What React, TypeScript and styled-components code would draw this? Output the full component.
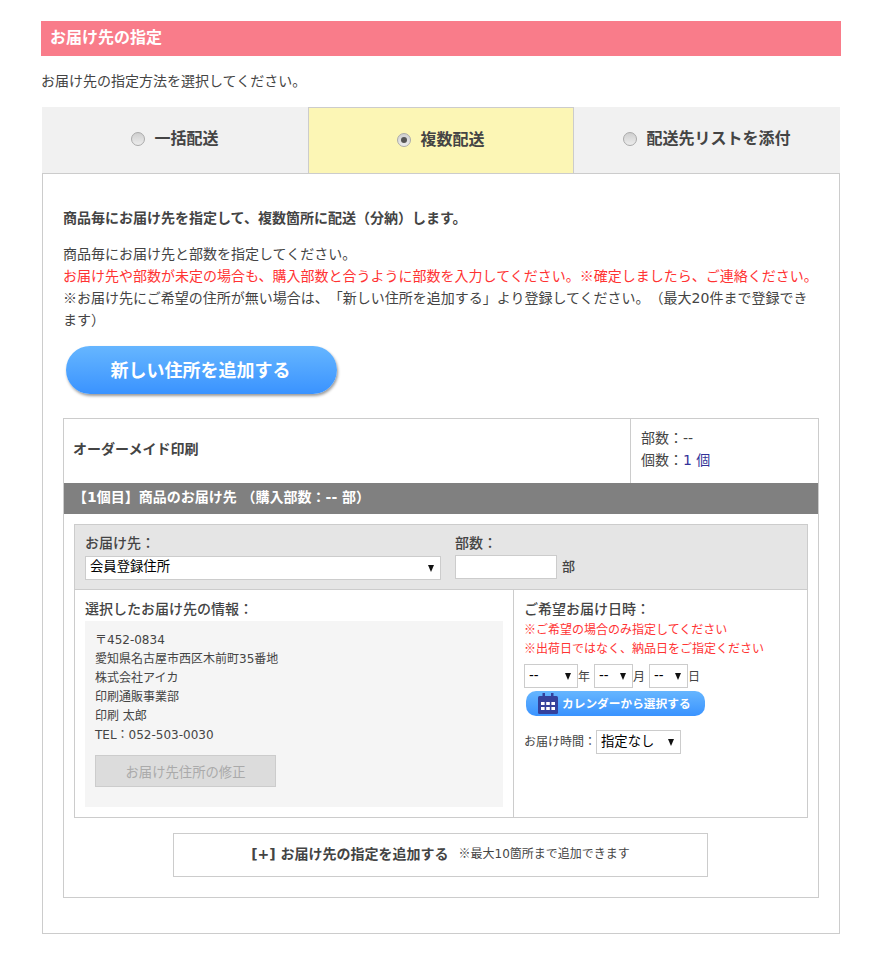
import React from 'react';
import styled, { createGlobalStyle } from 'styled-components';

const GlobalStyle = createGlobalStyle`
  body {
    margin: 0;
    background: #fff;
    color: #444;
    font-family: "DejaVu Sans", "Noto Sans CJK JP", sans-serif;
    font-size: 14px;
    line-height: 22px;
    text-spacing-trim: space-all;
  }
`;

const Page = styled.div`
  width: 800px;
  padding: 21px 0 24px 41px;
`;

const Heading = styled.h2`
  margin: 0;
  height: 35px;
  padding-left: 9px;
  background: #f97c8a;
  color: #fff;
  font-size: 16px;
  font-weight: 700;
  line-height: 33px;
`;

const Intro = styled.p`
  margin: 14px 0 15px;
`;

const Tabs = styled.div`
  display: grid;
  grid-template-columns: 266px 266px 266px;
  margin-left: 1px;
  height: 66px;
`;

const Tab = styled.div<{ $active?: boolean }>`
  display: flex;
  align-items: center;
  justify-content: center;
  gap: 9px;
  box-sizing: border-box;
  padding-bottom: 2px;
  background: ${(p) => (p.$active ? '#fcf6b5' : '#f1f1f1')};
  border: ${(p) => (p.$active ? '1px solid #ccc' : 'none')};
  border-bottom: none;
  color: #444;
  font-size: 16px;
  font-weight: 700;
`;

const Radio = styled.span<{ $checked?: boolean }>`
  position: relative;
  width: 12px;
  height: 12px;
  border-radius: 50%;
  border: 1px solid #aaa;
  background: linear-gradient(#cfcfcf, #ececec);

  &::after {
    content: '';
    display: ${(p) => (p.$checked ? 'block' : 'none')};
    position: absolute;
    inset: 3px;
    border-radius: 50%;
    background: #555;
  }
`;

const Panel = styled.div`
  box-sizing: border-box;
  width: 798px;
  height: 761px;
  margin-left: 1px;
  padding: 33px 20px 0;
  border: 1px solid #ccc;
`;

const Lead = styled.p`
  margin: 0 0 14px;
  font-weight: 700;
  font-size: 14px;
`;

const Notes = styled.p`
  margin: 0;
`;

const Red = styled.span`
  color: #ff3333;
`;

const Kome = styled.span`
  font-family: "Noto Sans CJK JP", sans-serif;
  line-height: 0;
`;

const AddAddress = styled.button`
  display: block;
  width: 271px;
  height: 48px;
  margin: 15px 0 24px 3px;
  padding: 0 2px 2px 0;
  border: none;
  border-radius: 24px;
  background: linear-gradient(#66b6ff, #3a93ff);
  box-shadow: 1px 2px 3px rgba(0, 0, 0, 0.4);
  color: #fff;
  font-family: inherit;
  font-size: 18px;
  font-weight: 700;
`;

const Order = styled.div`
  box-sizing: border-box;
  width: 756px;
  height: 480px;
  border: 1px solid #ccc;
`;

const ProductRow = styled.div`
  display: grid;
  grid-template-columns: 566px 1fr;
  height: 64px;
`;

const ProductName = styled.div`
  display: flex;
  align-items: center;
  padding: 0 0 5px 9px;
  font-weight: 700;
  font-size: 14px;
`;

const ProductMeta = styled.div`
  padding: 8px 0 0 10px;
  border-left: 1px solid #ccc;
`;

const Link = styled.span`
  color: #333399;
`;

const Bar = styled.div`
  height: 31px;
  padding-left: 9px;
  background: #808080;
  color: #fff;
  font-weight: 700;
  line-height: 29px;
`;

const Dest = styled.div`
  box-sizing: border-box;
  width: 734px;
  height: 294px;
  margin: 10px 0 0 10px;
  border: 1px solid #ccc;
`;

const DestTop = styled.div`
  display: flex;
  height: 65px;
  box-sizing: border-box;
  padding: 7px 10px 0;
  background: #e5e5e5;
  border-bottom: 1px solid #ccc;
`;

const Field = styled.div<{ $w: number }>`
  width: ${(p) => p.$w}px;
`;

const Label = styled.div`
  height: 23px;
  font-weight: 500;
  font-size: 14px;
  line-height: 24px;
`;

const FieldLabel = styled(Label)`
  line-height: 22px;
`;

const SelectBox = styled.span<{ $w: number }>`
  position: relative;
  display: inline-block;
  flex: none;
  width: ${(p) => p.$w}px;
  height: 24px;

  &::after {
    content: '';
    position: absolute;
    top: 9px;
    right: 7px;
    border-style: solid;
    border-width: 7px 3.5px 0;
    border-color: #111 transparent transparent;
  }
`;

const Select = styled.select`
  display: block;
  box-sizing: border-box;
  width: 100%;
  height: 24px;
  padding: 0 0 2px 4px;
  border: 1px solid #ccc;
  border-radius: 0;
  appearance: none;
  background: #fff;
  color: #000;
  font-family: inherit;
  font-size: 13.33px;
`;

const QtyRow = styled.div`
  display: flex;
  align-items: center;
  gap: 5px;
  font-weight: 500;
  font-size: 13px;
`;

const QtyInput = styled.input`
  box-sizing: border-box;
  width: 102px;
  height: 24px;
  border: 1px solid #ccc;
`;

const DestBottom = styled.div`
  display: grid;
  grid-template-columns: 438px 1fr;
  height: 227px;
`;

const InfoCell = styled.div`
  padding: 7px 10px 0;
`;

const WhenCell = styled.div`
  padding: 7px 10px 0;
  border-left: 1px solid #ccc;
`;

const AddressBox = styled.div`
  box-sizing: border-box;
  height: 186px;
  margin-top: 1px;
  padding: 10px 10px 0;
  background: #f5f5f5;
  font-size: 12px;
  line-height: 19px;
`;

const EditButton = styled.button`
  display: block;
  width: 181px;
  height: 32px;
  margin-top: 10px;
  border: 1px solid #ccc;
  background: #dcdcdc;
  color: #aaa;
  font-family: inherit;
  font-size: 13.33px;
`;

const Warnings = styled.div`
  margin-top: 1px;
  color: #ff3333;
  font-size: 12px;
  line-height: 19px;
`;

const DateRow = styled.div`
  display: flex;
  align-items: center;
  height: 24px;
  margin-top: 5px;
  font-size: 12px;
`;

const Unit = styled.span`
  margin-right: 4px;
  padding-top: 2px;
`;

const CalendarButton = styled.div`
  display: flex;
  align-items: center;
  gap: 4px;
  width: 179px;
  height: 25px;
  box-sizing: border-box;
  margin: 3px 0 0 2px;
  padding-left: 12px;
  border-radius: 10px;
  background: linear-gradient(#66b6ff, #3a93ff);
  color: #fff;
  font-size: 11.7px;
  font-weight: 700;
`;

const TimeRow = styled.div`
  display: flex;
  align-items: center;
  margin-top: 14px;
  font-size: 12px;
`;

const AddDest = styled.div`
  display: flex;
  align-items: center;
  justify-content: center;
  gap: 10px;
  box-sizing: border-box;
  width: 535px;
  height: 44px;
  margin: 15px 0 0 109px;
  padding-bottom: 2px;
  border: 1px solid #ccc;
  font-weight: 700;
`;

const AddNote = styled.span`
  font-size: 12px;
  font-weight: 400;
`;

const CalendarIcon = () => (
  <svg width="20" height="21" viewBox="0 0 20 21">
    <rect x="0" y="3" width="20" height="18" rx="1.5" fill="#34419c" />
    <rect x="4.5" y="0" width="2.5" height="4" fill="#34419c" />
    <rect x="13" y="0" width="2.5" height="4" fill="#34419c" />
    <g fill="#fff">
      <rect x="3" y="9" width="3.6" height="3" />
      <rect x="8.2" y="9" width="3.6" height="3" />
      <rect x="13.4" y="9" width="3.6" height="3" />
      <rect x="3" y="14" width="3.6" height="3" />
      <rect x="8.2" y="14" width="3.6" height="3" />
      <rect x="13.4" y="14" width="3.6" height="3" />
    </g>
  </svg>
);

const Dropdown = ({ w, label }: { w: number; label: string }) => (
  <SelectBox $w={w}>
    <Select>
      <option>{label}</option>
    </Select>
  </SelectBox>
);

const App = () => {
  return (
    <Page>
      <GlobalStyle />
      <Heading>お届け先の指定</Heading>
      <Intro>お届け先の指定方法を選択してください。</Intro>
      <Tabs>
        <Tab>
          <Radio />
          一括配送
        </Tab>
        <Tab $active>
          <Radio $checked />
          複数配送
        </Tab>
        <Tab>
          <Radio />
          配送先リストを添付
        </Tab>
      </Tabs>
      <Panel>
        <Lead>商品毎にお届け先を指定して、複数箇所に配送（分納）します。</Lead>
        <Notes>
          商品毎にお届け先と部数を指定してください。
          <br />
          <Red>お届け先や部数が未定の場合も、購入部数と合うように部数を入力してください。<Kome>※</Kome>確定しましたら、ご連絡ください。</Red>
          <br />
          <Kome>※</Kome>お届け先にご希望の住所が無い場合は、「新しい住所を追加する」より登録してください。（最大20件まで登録でき
          <br />
          ます）
        </Notes>
        <AddAddress>新しい住所を追加する</AddAddress>
        <Order>
          <ProductRow>
            <ProductName>オーダーメイド印刷</ProductName>
            <ProductMeta>
              部数：--
              <br />
              個数：<Link>1 個</Link>
            </ProductMeta>
          </ProductRow>
          <Bar>【1個目】商品のお届け先 （購入部数：-- 部）</Bar>
          <Dest>
            <DestTop>
              <Field $w={370}>
                <FieldLabel>お届け先：</FieldLabel>
                <Dropdown w={356} label="会員登録住所" />
              </Field>
              <Field $w={200}>
                <FieldLabel>部数：</FieldLabel>
                <QtyRow>
                  <QtyInput />
                  <span>部</span>
                </QtyRow>
              </Field>
            </DestTop>
            <DestBottom>
              <InfoCell>
                <Label>選択したお届け先の情報：</Label>
                <AddressBox>
                  〒452-0834
                  <br />
                  愛知県名古屋市西区木前町35番地
                  <br />
                  株式会社アイカ
                  <br />
                  印刷通販事業部
                  <br />
                  印刷 太郎
                  <br />
                  TEL：052-503-0030
                  <EditButton>お届け先住所の修正</EditButton>
                </AddressBox>
              </InfoCell>
              <WhenCell>
                <Label>ご希望お届け日時：</Label>
                <Warnings>
                  <Kome>※</Kome>ご希望の場合のみ指定してください
                  <br />
                  <Kome>※</Kome>出荷日ではなく、納品日をご指定ください
                </Warnings>
                <DateRow>
                  <Dropdown w={54} label="--" />
                  <Unit>年</Unit>
                  <Dropdown w={39} label="--" />
                  <Unit>月</Unit>
                  <Dropdown w={39} label="--" />
                  <Unit>日</Unit>
                </DateRow>
                <CalendarButton>
                  <CalendarIcon />
                  カレンダーから選択する
                </CalendarButton>
                <TimeRow>
                  <span>お届け時間：</span>
                  <Dropdown w={85} label="指定なし" />
                </TimeRow>
              </WhenCell>
            </DestBottom>
          </Dest>
          <AddDest>
            <span>[+] お届け先の指定を追加する</span>
            <AddNote>
              <Kome>※</Kome>最大10箇所まで追加できます
            </AddNote>
          </AddDest>
        </Order>
      </Panel>
    </Page>
  );
};

export default App;
